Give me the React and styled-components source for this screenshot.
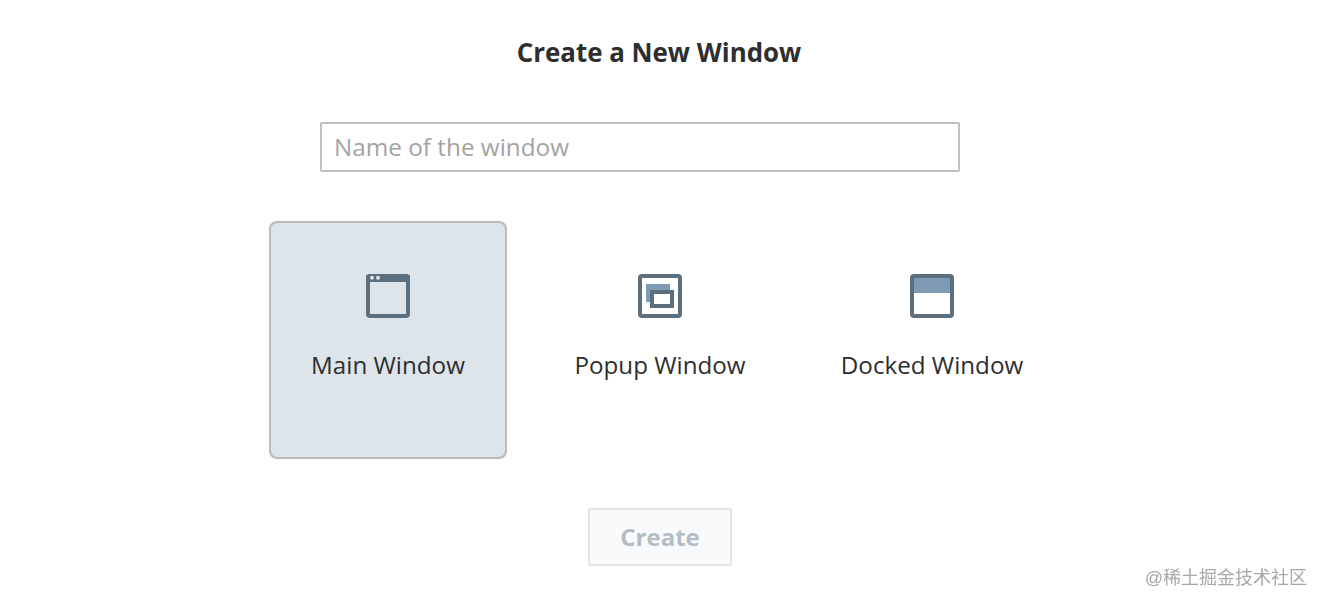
import React, { useState } from "react";
import styled, { createGlobalStyle } from "styled-components";

const GlobalStyle = createGlobalStyle`
  html, body {
    margin: 0;
    padding: 0;
    background: #fff;
  }
  body {
    font-family: "Open Sans", "Noto Sans", sans-serif;
    color: #2e2e2e;
    overflow: hidden;
  }
`;

const MainWindowIcon = () => (
  <svg width="44" height="44" viewBox="0 0 44 44">
    <rect x="2" y="2" width="40" height="40" rx="2" fill="none" stroke="#5c6f7f" strokeWidth="4" />
    <rect x="0" y="1" width="44" height="7" fill="#5c6f7f" />
    <circle cx="6" cy="3.8" r="2" fill="#dde4ea" />
    <circle cx="12" cy="3.8" r="2" fill="#dde4ea" />
  </svg>
);

const PopupWindowIcon = () => (
  <svg width="44" height="44" viewBox="0 0 44 44">
    <rect x="2" y="2" width="40" height="40" rx="2" fill="#fff" stroke="#5c6f7f" strokeWidth="4" />
    <rect x="8" y="10" width="24" height="18" fill="#7f9ab3" />
    <rect x="14" y="18" width="20" height="14" fill="#fff" stroke="#5c6f7f" strokeWidth="4" />
  </svg>
);

const DockedWindowIcon = () => (
  <svg width="44" height="44" viewBox="0 0 44 44">
    <rect x="2" y="2" width="40" height="40" rx="2" fill="#fff" stroke="#5c6f7f" strokeWidth="4" />
    <rect x="4" y="4" width="36" height="15" fill="#7f9ab3" />
  </svg>
);

const windowTypes = [
  { id: "main", title: "Main Window", Icon: MainWindowIcon },
  { id: "popup", title: "Popup Window", Icon: PopupWindowIcon },
  { id: "docked", title: "Docked Window", Icon: DockedWindowIcon },
];

export default function App() {
  const [selected, setSelected] = useState("main");

  const createTypeCards = windowTypes.map(({ id, title, Icon }) => {
    return (
      <TypeCard key={id} $active={selected === id} onClick={() => setSelected(id)}>
        <IconSlot>
          <Icon />
        </IconSlot>
        <TypeLabel>{title}</TypeLabel>
      </TypeCard>
    );
  });

  return (
    <PageWrapper>
      <GlobalStyle />
      <Title>Create a New Window</Title>
      <NameInput placeholder="Name of the window" />
      <TypeRow>{createTypeCards}</TypeRow>
      <CreateButton disabled>Create</CreateButton>
      <Watermark>@稀土掘金技术社区</Watermark>
    </PageWrapper>
  );
}

const PageWrapper = styled.main`
  box-sizing: border-box;
  width: 1320px;
  height: 606px;
  display: flex;
  flex-direction: column;
  align-items: center;
  padding-top: 35px;
`;
const Title = styled.h1`
  margin: 0 2px 52px 0;
  font-size: 25.9px;
  line-height: 35px;
  font-weight: 700;
  color: #2e2e2e;
`;
const NameInput = styled.input`
  box-sizing: border-box;
  width: 640px;
  height: 50px;
  margin-right: 40px;
  padding: 0 12px 2px;
  border: 2px solid #c0c0c0;
  border-radius: 2px;
  outline: none;
  font-family: inherit;
  font-size: 24.3px;
  color: #2e2e2e;
  &::placeholder {
    color: #a3a3a3;
    opacity: 1;
  }
`;
const TypeRow = styled.div`
  display: flex;
  gap: 34px;
  margin-top: 49px;
`;
const TypeCard = styled.div`
  box-sizing: border-box;
  width: 238px;
  height: 238px;
  display: flex;
  flex-direction: column;
  align-items: center;
  padding-top: 51px;
  border: 2px solid ${(props) => (props.$active ? "#bababa" : "transparent")};
  border-radius: 8px;
  background: ${(props) => (props.$active ? "#dde4ea" : "transparent")};
  cursor: pointer;
`;
const IconSlot = styled.div`
  width: 44px;
  height: 44px;
  margin-bottom: 28px;
`;
const TypeLabel = styled.span`
  font-size: 24.2px;
  line-height: 38px;
  white-space: nowrap;
`;
const CreateButton = styled.button`
  box-sizing: border-box;
  width: 144px;
  height: 58px;
  margin-top: 49px;
  padding: 0 0 2px;
  border: 2px solid #e1e3e5;
  border-radius: 2px;
  background: #f8fafc;
  font-family: inherit;
  font-size: 24px;
  font-weight: 700;
  color: #b4bcc4;
`;
const Watermark = styled.div`
  position: fixed;
  right: 18px;
  top: 565px;
  font-family: "Liberation Sans", "Noto Sans CJK SC", sans-serif;
  font-size: 18px;
  line-height: 26px;
  color: #a8a8a8;
`;
